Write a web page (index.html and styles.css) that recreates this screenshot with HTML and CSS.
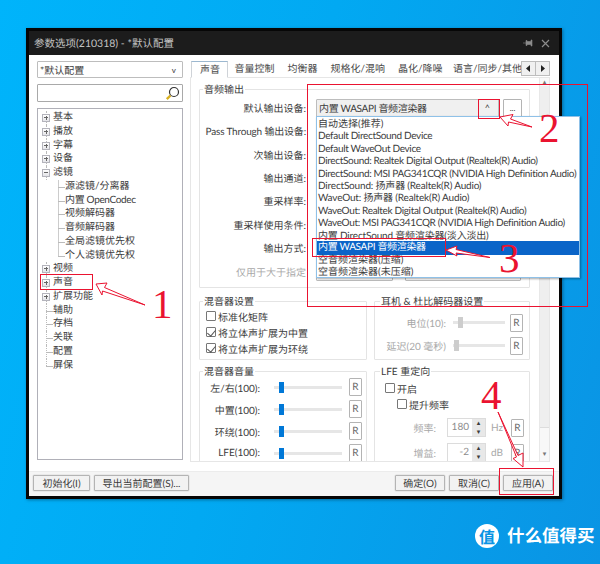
FILE: index.html
```html
<!DOCTYPE html>
<html lang="zh-CN">
<head>
  <meta charset="UTF-8">
  <title>参数选项</title>
  <link rel="stylesheet" href="styles.css">
</head>
<body>

<div class="window">
  <div class="titlebar">
    <span class="title-text">参数选项(210318) - *默认配置</span>
    <div class="title-icons">
      <svg width="10" height="10" viewBox="0 0 10 10"><path d="M0 5h3M3 2.500v5h1V6.500h4V8h1V2H8v1.500H4V2.500z" fill="#8c8c8c" stroke="#8c8c8c" stroke-width=".6"/></svg>
      <svg width="9" height="9" viewBox="0 0 9 9"><path d="M1 1l7 7M8 1L1 8" stroke="#8c8c8c" stroke-width="1.200" fill="none"/></svg>
    </div>
  </div>

  <div class="client">
    <div class="left-col">
      <div class="combo profile"><span>*默认配置</span><span class="chevron">v</span></div>
      <div class="search">
        <svg width="15" height="15" viewBox="0 0 15 15"><circle cx="9" cy="6" r="4.500" fill="#fff" stroke="#333" stroke-width="1.200"/><path d="M5.500 9.500L1.800 13.200" stroke="#d8b020" stroke-width="2.400"/></svg>
      </div>
      <ul class="tree">
        <li class="node"><i class="exp plus"></i>基本</li>
        <li class="node"><i class="exp plus"></i>播放</li>
        <li class="node"><i class="exp plus"></i>字幕</li>
        <li class="node"><i class="exp plus"></i>设备</li>
        <li class="node"><i class="exp"></i>滤镜</li>
        <li class="child">源滤镜/分离器</li>
        <li class="child tight">内置 OpenCodec</li>
        <li class="child">视频解码器</li>
        <li class="child">音频解码器</li>
        <li class="child">全局滤镜优先权</li>
        <li class="child last">个人滤镜优先权</li>
        <li class="node"><i class="exp plus"></i>视频</li>
        <li class="node"><i class="exp plus"></i>声音</li>
        <li class="node"><i class="exp plus"></i>扩展功能</li>
        <li class="leaf">辅助</li>
        <li class="leaf">存档</li>
        <li class="leaf">关联</li>
        <li class="leaf">配置</li>
        <li class="leaf end">屏保</li>
      </ul>
    </div>

    <div class="right-col">
      <div class="tabbar">
        <div class="tabs">
          <span class="tab active">声音</span>
          <span class="tab">音量控制</span>
          <span class="tab">均衡器</span>
          <span class="tab">规格化/混响</span>
          <span class="tab">晶化/降噪</span>
          <span class="tab">语言/同步/其他</span>
        </div>
        <div class="tab-arrows">
          <span class="tab-arrow"><svg width="5" height="7" viewBox="0 0 5 7"><path d="M4 0v7L0 3.500z" fill="#222"/></svg></span>
          <span class="tab-arrow"><svg width="5" height="7" viewBox="0 0 5 7"><path d="M1 0v7l4-3.500z" fill="#222"/></svg></span>
        </div>
      </div>

      <div class="page">
        <div class="page-body">
          <div class="group audio-out">
            <div class="group-title">音频输出</div>
            <div class="form-row"><label>默认输出设备:</label><div class="combo open"><span class="tight">内置 WASAPI 音频渲染器</span><span class="caret">^</span></div><span class="btn more">...</span></div>
            <div class="form-row"><label class="mixed">Pass Through 输出设备:</label><div class="combo plain"></div></div>
            <div class="form-row"><label>次输出设备:</label><div class="combo plain"></div></div>
            <div class="form-row"><label>输出通道:</label><div class="combo plain"></div></div>
            <div class="form-row"><label>重采样率:</label><div class="combo plain"></div></div>
            <div class="form-row"><label>重采样使用条件:</label><div class="combo plain"></div></div>
            <div class="form-row"><label>输出方式:</label><div class="combo plain"></div></div>
            <div class="form-row last-row"><label class="off">仅用于大于指定</label><div class="combo small"></div><div class="combo wide"></div></div>
          </div>

          <div class="mixer-grid">
            <div class="group mix-settings">
              <div class="group-title">混音器设置</div>
              <div class="check-row"><i class="check"></i>标准化矩阵</div>
              <div class="check-row"><i class="check on"></i>将立体声扩展为中置</div>
              <div class="check-row"><i class="check on"></i>将立体声扩展为环绕</div>
            </div>

            <div class="group headphones">
              <div class="group-title">耳机 &amp; 杜比解码器设置</div>
              <div class="hp-row"><label class="off">电位(10):</label><div class="slider gray"><i class="thumb t-pos"></i></div><span class="btn reset">R</span></div>
              <div class="hp-row"><label class="off">延迟(20 毫秒)</label><div class="slider gray"><i class="thumb t-start"></i></div><span class="btn reset">R</span></div>
            </div>

            <div class="group volume">
              <div class="group-title">混音器音量</div>
              <div class="vol-row"><label>左/右(100):</label><div class="slider"><i class="thumb"></i></div><span class="btn reset">R</span></div>
              <div class="vol-row"><label>中置(100):</label><div class="slider"><i class="thumb"></i></div><span class="btn reset">R</span></div>
              <div class="vol-row"><label>环绕(100):</label><div class="slider"><i class="thumb"></i></div><span class="btn reset">R</span></div>
              <div class="vol-row"><label>LFE(100):</label><div class="slider"><i class="thumb"></i></div><span class="btn reset">R</span></div>
            </div>

            <div class="group lfe">
              <div class="group-title">LFE 重定向</div>
              <div class="lfe-check"><i class="check"></i>开启</div>
              <div class="lfe-check sub"><i class="check"></i>提升频率</div>
              <div class="spin-row">
                <label class="off">频率:</label>
                <div class="spin"><span class="spin-val">180</span><span class="spin-btns"><b>▴</b><b>▾</b></span></div>
                <span class="unit">Hz</span><span class="btn reset">R</span>
              </div>
              <div class="spin-row">
                <label class="off">增益:</label>
                <div class="spin"><span class="spin-val">-2</span><span class="spin-btns"><b>▴</b><b>▾</b></span></div>
                <span class="unit">dB</span><span class="btn reset">R</span>
              </div>
            </div>
          </div>
        </div>
        <div class="scrollbar"><span>▴</span><div class="scroll-thumb"></div><span>▾</span></div>
      </div>
    </div>
  </div>

  <div class="footer">
    <span class="btn foot init">初始化(I)</span>
    <span class="btn foot export">导出当前配置(S)...</span>
    <span class="spacer"></span>
    <span class="btn foot">确定(O)</span>
    <span class="btn foot">取消(C)</span>
    <span class="btn foot">应用(A)</span>
  </div>
</div>

<ul class="dropdown">
  <li>自动选择(推荐)</li>
  <li class="tight">Default DirectSound Device</li>
  <li class="tight">Default WaveOut Device</li>
  <li class="tight">DirectSound: Realtek Digital Output (Realtek(R) Audio)</li>
  <li class="tight">DirectSound: MSI PAG341CQR (NVIDIA High Definition Audio)</li>
  <li class="mixed">DirectSound: 扬声器 (Realtek(R) Audio)</li>
  <li class="mixed">WaveOut: 扬声器 (Realtek(R) Audio)</li>
  <li class="tight">WaveOut: Realtek Digital Output (Realtek(R) Audio)</li>
  <li class="tight">WaveOut: MSI PAG341CQR (NVIDIA High Definition Audio)</li>
  <li class="mixed">内置 DirectSound 音频渲染器(淡入淡出)</li>
  <li class="selected tight">内置 WASAPI 音频渲染器</li>
  <li>空音频渲染器(压缩)</li>
  <li>空音频渲染器(未压缩)</li>
</ul>

<!-- red notes drawn over the screenshot -->
<div class="mark mark-main"></div>
<div class="mark mark-1"></div>
<div class="mark mark-2"></div>
<div class="mark mark-3"></div>
<div class="mark mark-4"></div>
<svg class="arrows" width="600" height="564" viewBox="0 0 600 564">
  <path d="M96 284L107 283L104.500 287.500L145 305L102.500 291L102 295z"/>
  <path d="M500 117L513 114.500L510.500 119L532 127L508.500 122L508 126z"/>
  <path d="M446 250L457 246L456 249.500L490 257.500L456 253L457 256z"/>
  <path d="M498 412L518 455.500L523 453L523 467L513 458.500L516.500 457z"/>
</svg>
<span class="note note-1">1</span>
<span class="note note-2">2</span>
<span class="note note-3">3</span>
<span class="note note-4">4</span>

<div class="brand">
  <span class="brand-logo">值</span>
  <span class="brand-name">什么值得买</span>
</div>

</body>
</html>
```

FILE: styles.css
```css
* {
  box-sizing: border-box;
}
body {
  margin: 0;
  width: 600px;
  height: 564px;
  position: relative;
  overflow: hidden;
  background: linear-gradient(105deg, #00b4fb 0%, #02a9f2 45%, #0a94e4 100%);
  font-family: Lato, "Noto Sans CJK SC", sans-serif;
  font-size: 10px;
  color: #3c3c3c;
  text-rendering: geometricPrecision;
}
ul {
  list-style: none;
  margin: 0;
  padding: 0;
}
i {
  display: block;
}
/* latin runs come out wider than in the original */
.tight {
  letter-spacing: -0.33px;
}
.mixed {
  letter-spacing: -0.18px;
}

.window {
  position: absolute;
  left: 26px;
  top: 28px;
  width: 536px;
  height: 471px;
  border: 3px solid #060606;
  background: white;
  display: flex;
  flex-direction: column;
  box-shadow: 1px 1px 3px rgba(0,0,0,0.35);
}
.titlebar {
  height: 24px;
  flex: none;
  background: #1c1c1c;
  color: #c4c4c4;
  display: flex;
  align-items: center;
  justify-content: space-between;
  padding: 0 9px 0 5px;
}
.title-text {
  font-size: 10.500px;
}
.title-icons {
  display: flex;
  align-items: center;
  gap: 8px;
}

.client {
  flex: 1;
  display: flex;
  gap: 7px;
  padding: 6px 9px 0 8px;
  min-height: 0;
}
.left-col {
  width: 146px;
  flex: none;
  display: flex;
  flex-direction: column;
  padding-bottom: 11px;
}
.right-col {
  width: 360px;
  flex: none;
  display: flex;
  flex-direction: column;
  padding-bottom: 9px;
}

.combo {
  height: 18px;
  border: 1px solid #bdbdbd;
  background: #f0f0f0;
  display: flex;
  align-items: center;
  justify-content: space-between;
  padding: 0 6px 0 2px;
  border-radius: 1px;
}
.profile {
  height: 17px;
  background: white;
}
.chevron {
  font-size: 8px;
}
.search {
  height: 18px;
  margin-top: 6px;
  border: 1px solid #a9a9a9;
  border-radius: 1px;
  display: flex;
  justify-content: flex-end;
  align-items: center;
  padding-right: 2px;
}
.tree {
  flex: 1;
  margin-top: 6px;
  border: 1px solid #b0b0b8;
  padding-top: 2px;
}
.tree li {
  height: 13.750px;
  line-height: 13.750px;
  position: relative;
  white-space: nowrap;
}
.node, .leaf {
  padding-left: 15px;
}
.node::before, .leaf::before {
  content: "";
  position: absolute;
  left: 7.500px;
  top: 0;
  height: 100%;
  border-left: 1px dotted #bbb;
}
.leaf::after, .child::after {
  content: "";
  position: absolute;
  top: 7px;
  width: 7px;
  border-top: 1px solid #bbb;
}
.leaf::after {
  left: 8px;
}
.leaf.end::before {
  height: 7px;
}
.child {
  padding-left: 27px;
}
.child::before {
  content: "";
  position: absolute;
  left: 19.500px;
  top: 0;
  height: 100%;
  border-left: 1px solid #ccc;
}
.child.last::before {
  height: 7px;
}
.child::after {
  left: 20px;
}
.exp {
  position: absolute;
  left: 4px;
  top: 3px;
  width: 8px;
  height: 8px;
  border: 1px solid #b4b4bc;
  background: linear-gradient(to bottom, #fff, #e4e4e8);
  z-index: 1;
}
.exp::before {
  content: "";
  position: absolute;
  left: 1px;
  top: 2px;
  width: 4px;
  border-top: 1px solid #666;
}
.exp.plus::after {
  content: "";
  position: absolute;
  left: 2.500px;
  top: 1px;
  height: 4px;
  border-left: 1px solid #666;
}

.tabbar {
  height: 17px;
  flex: none;
  display: flex;
  position: relative;
  z-index: 1;
}
.tabs {
  width: 331px;
  display: flex;
  padding-left: 1px;
  overflow: hidden;
  white-space: nowrap;
}
.tab {
  padding: 1px 6.500px 0;
  line-height: 14px;
  flex: none;
  color: #4a4a4a;
}
.tab:last-child {
  margin-left: -2.500px;
  padding-right: 0;
}
.tab.active {
  width: 37px;
  padding-left: 8px;
  border: 1px solid #cfd3d8;
  border-top-color: #9cb8d0;
  border-bottom: 1px solid white;
  height: 17px;
  background: white;
}
.tab-arrows {
  display: flex;
}
.tab-arrow {
  width: 15px;
  height: 15px;
  margin-right: -1px;
  border: 1px solid #bdbdbd;
  background: #f0f0f0;
  display: flex;
  align-items: center;
  justify-content: center;
}

.page {
  flex: 1;
  display: flex;
  border: 1px solid #e6e6e6;
  margin-top: -1px;
  min-height: 0;
  overflow: hidden;
}
.page-body {
  width: 348px;
  padding: 11px 0 0 8px;
  overflow: hidden;
}
.scrollbar {
  width: 10px;
  flex: none;
  background: #f8f8f8;
  border-left: 1px solid #e8e8e8;
  display: flex;
  flex-direction: column;
  align-items: center;
  font-size: 7px;
  line-height: 8px;
  color: #777;
  padding-bottom: 3px;
}
.scroll-thumb {
  flex: 1;
  align-self: stretch;
  margin-bottom: 22px;
  background: #efefef;
  border-bottom: 1px solid #ddd;
}

.group {
  border: 1px solid #e4e4e4;
  border-radius: 1px;
  padding: 0 6px;
}
.group-title {
  width: fit-content;
  height: 14px;
  line-height: 14px;
  margin-top: -7px;
  padding: 0 1px;
  background: white;
  white-space: nowrap;
}
.audio-out {
  width: 331px;
  height: 199px;
  padding: 0 7px 0 0;
}
.audio-out .group-title {
  margin-left: 3px;
  margin-bottom: -1px;
}
.form-row {
  height: 23.300px;
  display: flex;
  align-items: center;
  gap: 4px;
  white-space: nowrap;
}
.form-row label {
  width: 106px;
  margin-right: 6px;
  text-align: right;
  flex: none;
}
.off {
  color: #a8a8a8;
}
.combo.open {
  width: 183px;
}
.caret {
  font-size: 9px;
  margin-right: 2px;
}
.combo.plain {
  width: 183px;
}
.btn {
  border: 1px solid #b4b4b4;
  border-radius: 1px;
  display: flex;
  align-items: center;
  justify-content: center;
  white-space: nowrap;
}
.more {
  width: 19px;
  height: 18px;
  font-size: 8px;
  background: white;
}
.last-row {
  margin-top: 1px;
}
.combo.small {
  width: 77px;
  background: white;
}
.combo.wide {
  width: 116px;
  margin-left: 8px;
  background: white;
}

.mixer-grid {
  display: grid;
  grid-template-columns: 168px 156px;
  grid-template-rows: 59px 100px;
  gap: 11px 7px;
  margin-top: 13px;
}
.mix-settings, .volume {
  padding-left: 0;
}
.mix-settings .group-title, .volume .group-title {
  margin-left: 3px;
}
.mix-settings .group-title {
  margin-bottom: -1px;
}
.check-row {
  height: 16px;
  display: flex;
  align-items: center;
  gap: 2px;
  padding-left: 6px;
}
.check {
  width: 10px;
  height: 10px;
  flex: none;
  border: 1px solid #777;
  border-radius: 1px;
  position: relative;
  background: white;
}
.check.on::after {
  content: "";
  position: absolute;
  left: 2px;
  top: 0;
  width: 4px;
  height: 7px;
  border: solid #555;
  border-width: 0 1px 1px 0;
  transform: rotate(40deg);
}

.slider {
  height: 3px;
  background: #e6e6e6;
  position: relative;
}
.thumb {
  position: absolute;
  left: 5px;
  top: -4px;
  width: 5px;
  height: 11px;
  background: #0078d7;
}
.gray .thumb {
  background: #cdcdcd;
}
.thumb.t-start {
  left: 1px;
}
.reset {
  width: 13px;
  height: 18px;
  flex: none;
  background: white;
  color: #666;
}

.vol-row {
  height: 22px;
  display: flex;
  align-items: center;
  white-space: nowrap;
}
.volume .group-title {
  margin-bottom: -3px;
}
.vol-row label {
  width: 60px;
  margin-right: 14px;
  text-align: right;
  flex: none;
}
.vol-row .slider {
  width: 68px;
  margin-right: 7px;
  flex: none;
}

.headphones .group-title, .lfe .group-title {
  margin-left: -1px;
}
.headphones .group-title {
  margin-bottom: 2px;
}
.hp-row {
  height: 23px;
  display: flex;
  align-items: center;
  white-space: nowrap;
}
.hp-row label {
  width: 65px;
  margin-right: 7px;
  text-align: right;
  flex: none;
}
.hp-row .slider {
  width: 52px;
  margin-right: 5px;
  flex: none;
}

.lfe-check {
  height: 16px;
  display: flex;
  align-items: center;
  gap: 2px;
  padding-left: 4px;
}
.lfe .group-title {
  margin-bottom: 1px;
}
.lfe-check.sub {
  padding-left: 16px;
}
.spin-row {
  height: 25px;
  display: flex;
  align-items: center;
  white-space: nowrap;
}
.lfe-check.sub + .spin-row {
  margin-top: 3px;
}
.spin-row label {
  width: 55px;
  margin-right: 11px;
  text-align: right;
  flex: none;
}
.spin {
  width: 39px;
  height: 19px;
  border: 1px solid #dcdcdc;
  display: flex;
  flex: none;
}
.spin-val {
  flex: 1;
  text-align: right;
  line-height: 16px;
  padding-right: 3px;
  color: #8c8c8c;
}
.spin-btns {
  width: 13px;
  display: flex;
  flex-direction: column;
  background: #e8e8e8;
}
.spin-btns b {
  height: 8.500px;
  line-height: 8.500px;
  font-size: 7px;
  font-weight: normal;
  text-align: center;
}
.unit {
  width: 25px;
  padding-left: 5px;
  color: #a8a8a8;
  flex: none;
}

.footer {
  height: 25px;
  flex: none;
  background: #f5f5f5;
  border-top: 1px solid #ececec;
  display: flex;
  align-items: center;
  gap: 4px;
  padding: 0 6px 3px 4px;
}
.foot {
  width: 50px;
  height: 16px;
  background: #f2f2f2;
  box-shadow: 0 0 0 0.5px #ddd;
}
.foot.init {
  width: 57px;
}
.foot.export {
  width: 95px;
}
.spacer {
  flex: 1;
}

.dropdown {
  position: absolute;
  left: 316px;
  top: 116px;
  width: 264px;
  height: 162px;
  padding-top: 1px;
  background: white;
  border: 1px solid #8fc1e8;
  box-shadow: 1px 1px 2px rgba(0,0,0,0.35);
}
.dropdown li {
  height: 12.400px;
  line-height: 12.400px;
  padding-left: 1px;
  white-space: nowrap;
}
.dropdown .selected {
  background: #0a64c8;
  color: white;
  height: 14px;
  line-height: 13px;
  margin-top: -1px;
  margin-bottom: -1px;
}

.mark {
  position: absolute;
  border: 1px solid #ea1330;
}
.mark-main {
  left: 307px;
  top: 84px;
  width: 281px;
  height: 223px;
}
.mark-1 {
  left: 40px;
  top: 274px;
  width: 53px;
  height: 16px;
}
.mark-2 {
  left: 478px;
  top: 99px;
  width: 22px;
  height: 20px;
}
.mark-3 {
  left: 312px;
  top: 238px;
  width: 134px;
  height: 19px;
}
.mark-4 {
  left: 499px;
  top: 468px;
  width: 55px;
  height: 27px;
}
.arrows {
  position: absolute;
  left: 0;
  top: 0;
}
.arrows path {
  fill: white;
  stroke: #ea1330;
  stroke-width: 1;
}
.note {
  position: absolute;
  font-family: "Liberation Serif", serif;
  font-size: 41px;
  line-height: 41px;
  color: #ea1330;
}
.note-1 {
  left: 152px;
  top: 284px;
}
.note-2 {
  left: 539px;
  top: 108px;
}
.note-3 {
  left: 499px;
  top: 238px;
}
.note-4 {
  left: 481px;
  top: 375px;
}

.brand {
  position: absolute;
  left: 475px;
  top: 524px;
  display: flex;
  align-items: center;
  gap: 8px;
  color: white;
}
.brand-logo {
  width: 24px;
  height: 24px;
  border-radius: 50%;
  background: white;
  color: #0a94e4;
  font: bold 16px/24px "Noto Sans CJK SC", sans-serif;
  text-align: center;
}
.brand-name {
  font: bold 17.500px/24px "Noto Sans CJK SC", sans-serif;
  white-space: nowrap;
}
```
